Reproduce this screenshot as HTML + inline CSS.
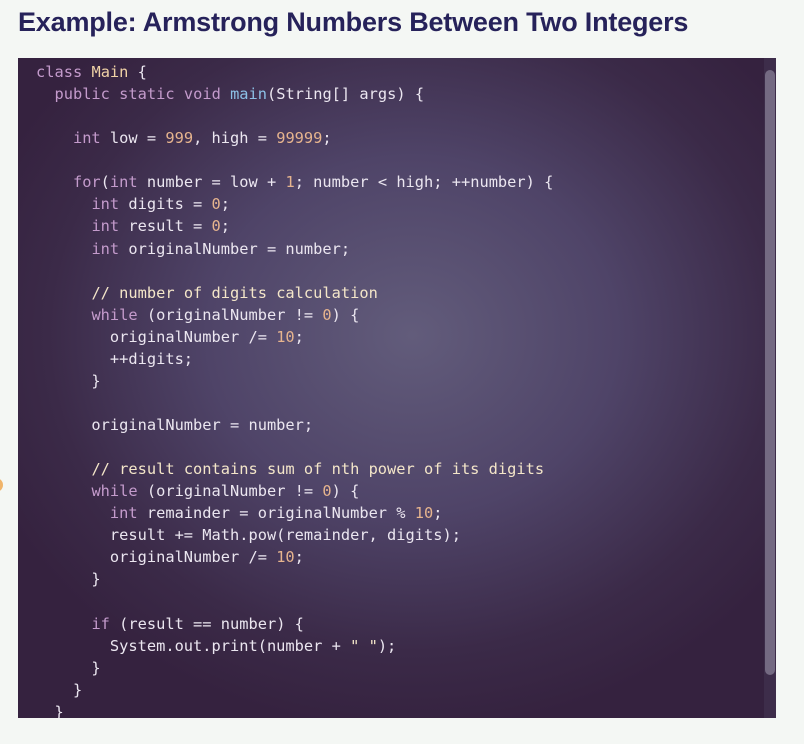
<!DOCTYPE html>
<html><head><meta charset="utf-8"><style>
html,body{margin:0;padding:0;width:804px;height:744px;overflow:hidden;background:#f4f7f4;}
h1{position:absolute;left:18px;top:4px;margin:0;font:bold 27px/36px "Liberation Sans",sans-serif;color:#26225a;letter-spacing:-0.2px;}
.code{position:absolute;left:18px;top:58px;width:758px;height:660px;overflow:hidden;
background:radial-gradient(ellipse 60% 60% at 52% 42%,#625c7b 0%,#4f4468 45%,#3b2a48 80%,#35223f 100%);}
pre{margin:0;padding:3px 0 0 18px;font:15.35px/22.07px "DejaVu Sans Mono","Liberation Mono",monospace;color:#ebe6f0;white-space:pre;}
.k{color:#c49bcc}.c{color:#f0d2a6}.n{color:#e6b48e}.f{color:#8cc0e6}.m{color:#f4e6c9}
.track{position:absolute;right:0;top:0;width:12px;height:100%;background:#3d2d4a;}
.thumb{position:absolute;left:1px;top:12px;width:10px;height:605px;border-radius:5px;background:#746a82;}
.dot{position:absolute;left:-4px;top:478px;width:7px;height:14px;border-radius:0 7px 7px 0;background:#f0b46a;}
</style></head><body>
<h1>Example: Armstrong Numbers Between Two Integers</h1>
<div class="dot"></div>
<div class="code"><pre><span class="k">class</span> <span class="c">Main</span> {
  <span class="k">public</span> <span class="k">static</span> <span class="k">void</span> <span class="f">main</span>(String[] args) {

    <span class="k">int</span> low = <span class="n">999</span>, high = <span class="n">99999</span>;

    <span class="k">for</span>(<span class="k">int</span> number = low + <span class="n">1</span>; number &lt; high; ++number) {
      <span class="k">int</span> digits = <span class="n">0</span>;
      <span class="k">int</span> result = <span class="n">0</span>;
      <span class="k">int</span> originalNumber = number;

      <span class="m">// number of digits calculation</span>
      <span class="k">while</span> (originalNumber != <span class="n">0</span>) {
        originalNumber /= <span class="n">10</span>;
        ++digits;
      }

      originalNumber = number;

      <span class="m">// result contains sum of nth power of its digits</span>
      <span class="k">while</span> (originalNumber != <span class="n">0</span>) {
        <span class="k">int</span> remainder = originalNumber % <span class="n">10</span>;
        result += Math.pow(remainder, digits);
        originalNumber /= <span class="n">10</span>;
      }

      <span class="k">if</span> (result == number) {
        System.out.print(number + <span class="m">" "</span>);
      }
    }
  }
}</pre><div class="track"><div class="thumb"></div></div></div>
</body></html>
